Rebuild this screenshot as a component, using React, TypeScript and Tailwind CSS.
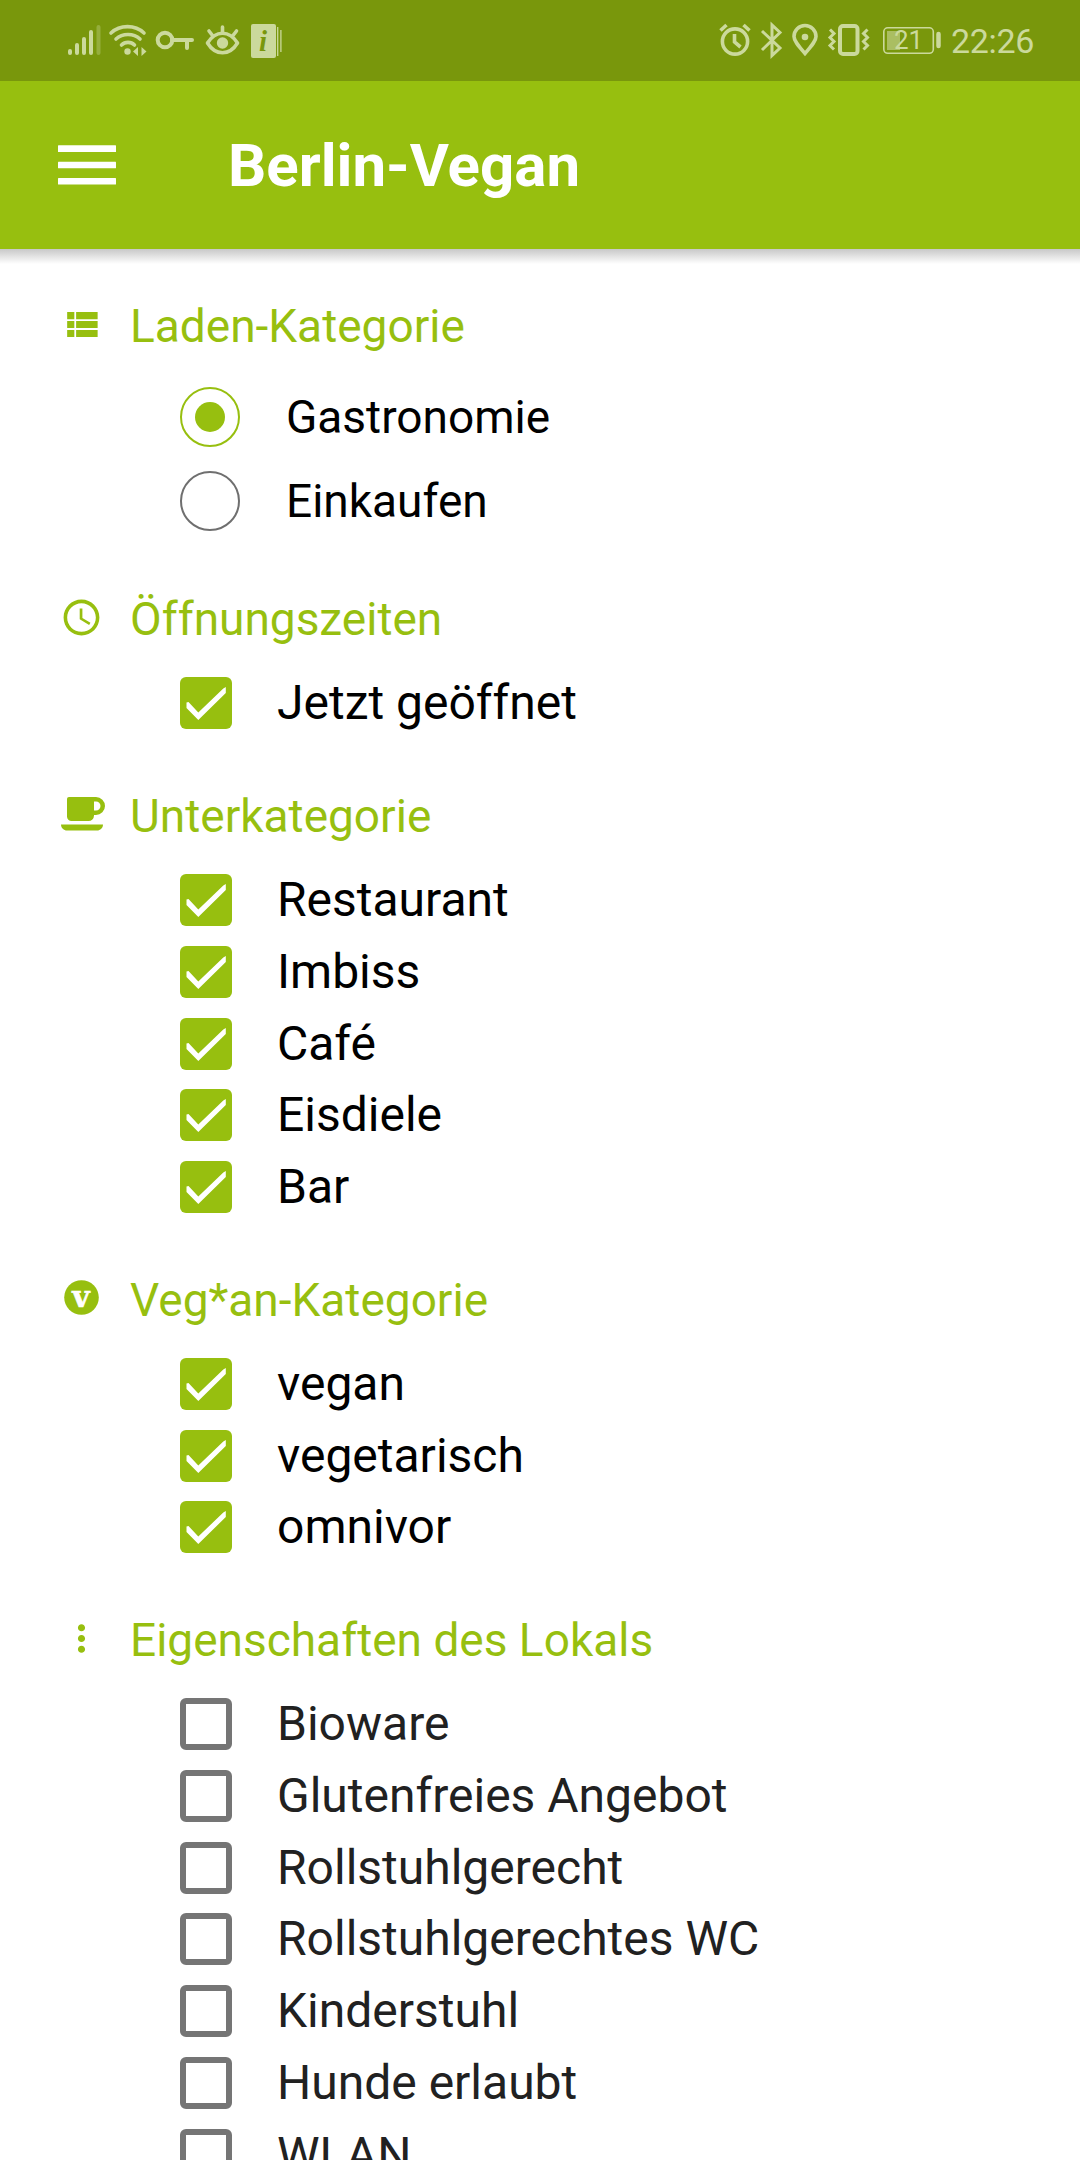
import React, { useState } from "react";
import { MdAccessTime, MdMoreVert } from "react-icons/md";

interface Option {
  id: string;
  label: string;
}

interface CheckGroup {
  id: string;
  title: string;
  icon: React.ReactNode;
  options: Option[];
  muted?: boolean;
}

function ListIcon() {
  return (
    <svg viewBox="0 0 24 24" className="size-[43px]" fill="currentColor">
      <path d="M4 14h4v-4H4v4zm0 5h4v-4H4v4zM4 9h4V5H4v4zm5 5h12v-4H9v4zm0 5h12v-4H9v4zM9 5v4h12V5H9z" />
    </svg>
  );
}

function CupIcon() {
  return (
    <svg viewBox="0 0 44 34" className="w-[44px] h-[34px] ml-[3px]" fill="currentColor">
      <path
        fillRule="evenodd"
        d="M8 0h27a9 9 0 0 1 0 18h-2v.5a5.500 5.500 0 0 1-5.500 5.500H10.500a4.500 4.500 0 0 1-4.500-4.500V2a2 2 0 0 1 2-2zM33 4.500v9h2a4.500 4.500 0 0 0 0-9z"
      />
      <path d="M0 27.500h42c0 3.600-2.800 6-6 6H6c-3.200 0-6-2.400-6-6z" />
    </svg>
  );
}

function VeganIcon() {
  return (
    <svg viewBox="0 0 35 35" className="size-[35px]">
      <circle cx="17.500" cy="17.500" r="17.300" fill="currentColor" />
      <text
        x="17"
        y="27"
        textAnchor="middle"
        fill="#fff"
        stroke="#fff"
        strokeWidth="0.6"
        className="font-['DejaVu_Serif'] text-[30px] font-bold"
      >
        v
      </text>
    </svg>
  );
}

const groups: CheckGroup[] = [
  {
    id: "hours",
    title: "Öffnungszeiten",
    icon: <MdAccessTime className="size-[43px]" />,
    options: [{ id: "open", label: "Jetzt geöffnet" }],
  },
  {
    id: "sub",
    title: "Unterkategorie",
    icon: <CupIcon />,
    options: [
      { id: "restaurant", label: "Restaurant" },
      { id: "imbiss", label: "Imbiss" },
      { id: "cafe", label: "Café" },
      { id: "eisdiele", label: "Eisdiele" },
      { id: "bar", label: "Bar" },
    ],
  },
  {
    id: "vegan",
    title: "Veg*an-Kategorie",
    icon: <VeganIcon />,
    options: [
      { id: "vegan", label: "vegan" },
      { id: "vegetarisch", label: "vegetarisch" },
      { id: "omnivor", label: "omnivor" },
    ],
  },
  {
    id: "props",
    title: "Eigenschaften des Lokals",
    icon: <MdMoreVert className="size-[43px]" />,
    muted: true,
    options: [
      { id: "bio", label: "Bioware" },
      { id: "gluten", label: "Glutenfreies Angebot" },
      { id: "rolli", label: "Rollstuhlgerecht" },
      { id: "rolliwc", label: "Rollstuhlgerechtes WC" },
      { id: "kinder", label: "Kinderstuhl" },
      { id: "hunde", label: "Hunde erlaubt" },
      { id: "wlan", label: "WLAN" },
    ],
  },
];

function StatusBar() {
  return (
    <div className="h-[81px] shrink-0 bg-[#79970c] text-[#cbd99c] flex items-center">
      <svg viewBox="0 0 250 70" className="w-[250px] h-[70px] ml-[50px] mt-[10px] self-start" fill="none" stroke="currentColor">
        <g strokeWidth="4" strokeLinecap="round">
          <path d="M20 41v2M27 35v8M34 29v14M41 22v21" />
          <path d="M48.500 17v26" opacity="0.35" />
        </g>
        <g strokeWidth="3.600" strokeLinecap="round">
          <path d="M61 23c9-8.500 24-8.500 33 0M66 29c6.500-6 17.500-6 24 0M71.500 35c3.500-3.500 9.500-3.500 13 0" />
        </g>
        <circle cx="77.500" cy="41.500" r="3.200" fill="currentColor" stroke="none" />
        <path d="M88 37v9l-5-4.500zM91.500 37v9l5-4.500z" fill="currentColor" stroke="none" />
        <g strokeWidth="4">
          <circle cx="115" cy="30" r="7.300" />
          <path d="M122 30h20M137 30v8" strokeLinecap="round" />
        </g>
        <g strokeWidth="3.600" strokeLinecap="round">
          <path d="M157.500 33c8-13 22-13 30 0-8 13-22 13-30 0z" strokeLinejoin="round" />
          <path d="M172.500 17v6M159 21l3.500 4.500M186.500 21l-3.500 4.500" />
        </g>
        <circle cx="172.500" cy="33" r="5.700" fill="currentColor" stroke="none" />
        <rect x="201" y="14" width="25" height="34" rx="2" fill="currentColor" stroke="none" />
        <path d="M227.700 17v29M230.900 20v22" strokeWidth="1.300" />
        <text x="213" y="41" textAnchor="middle" fill="#79970c" stroke="none" className="font-['Liberation_Serif'] text-[29px] font-bold italic">
          i
        </text>
      </svg>
      <svg viewBox="0 0 245 70" className="w-[245px] h-[70px] ml-[400px] mt-[10px] self-start" fill="none" stroke="currentColor">
        <g strokeWidth="3.600">
          <circle cx="35" cy="31.500" r="12.600" />
          <path d="M34.500 24v8l6 5" />
          <path d="M20.500 20.500l6-5.500M49.500 20.500l-6-5.500" />
        </g>
        <path d="M62 21l18 17-8 7.500V15l8 7.500L62 40" strokeWidth="3" />
        <path d="M105 43.500c-7-8-11-12.500-11-17a11 11 0 0 1 22 0c0 4.500-4 9-11 17z" strokeWidth="3.600" />
        <circle cx="105" cy="27" r="3.300" fill="currentColor" stroke="none" />
        <rect x="140" y="16" width="17.500" height="28" rx="3" strokeWidth="4" />
        <path d="M130 19.500l4 4-4 4 4 4-4 4 4 4M167.500 19.500l-4 4 4 4-4 4 4 4-4 4" strokeWidth="3" />
        <rect x="183.800" y="17.800" width="49.500" height="25.500" rx="4" strokeWidth="1.600" />
        <rect x="187" y="21" width="13" height="19" fill="currentColor" stroke="none" opacity="0.6" />
        <path d="M238.500 24v12" strokeWidth="4.500" strokeLinecap="round" />
        <text x="208.500" y="39" textAnchor="middle" fill="currentColor" stroke="none" className="font-[Roboto] text-[26px]">
          21
        </text>
      </svg>
      <span className="ml-[6px] text-[34px] leading-none tracking-[-0.3px]">22:26</span>
    </div>
  );
}

function SectionTitle({ icon, title }: { icon: React.ReactNode; title: string }) {
  return (
    <div className="h-[97.500px] flex items-center text-[#97bf0f]">
      <div className="w-[70px] ml-[46px] flex justify-center -mt-[3px]">{icon}</div>
      <h2 className="ml-[14px] mt-[1px] text-[46px] leading-none">{title}</h2>
    </div>
  );
}

function Checkbox({ checked }: { checked: boolean }) {
  if (!checked) {
    return <span className="size-[52px] rounded-[6px] border-[6px] border-[#757575]" />;
  }
  return (
    <span className="size-[52px] rounded-[6px] bg-[#97bf0f]">
      <svg viewBox="0 0 52 52" className="size-[52px]">
        <path d="M6.500 25.500l2-.5 9.800 10.500 25-24 2.500-1.500v6L18.300 43 6.500 31z" fill="#fff" />
      </svg>
    </span>
  );
}

function Radio({ checked }: { checked: boolean }) {
  return (
    <span
      className={`size-[60px] rounded-full border-2 flex items-center justify-center ${
        checked ? "border-[#97bf0f]" : "border-[#6f6f6f]"
      }`}
    >
      {checked && <span className="size-[30px] rounded-full bg-[#97bf0f]" />}
    </span>
  );
}

const shops: Option[] = [
  { id: "gastro", label: "Gastronomie" },
  { id: "einkauf", label: "Einkaufen" },
];

export default function App() {
  const [shop, setShop] = useState<string>("gastro");
  const [checked, setChecked] = useState<string[]>(
    groups.filter((g) => !g.muted).flatMap((g) => g.options.map((o) => o.id))
  );

  const toggle = (id: string) => {
    setChecked((prev) =>
      prev.includes(id) ? prev.filter((c) => c !== id) : [...prev, id]
    );
  };

  return (
    <div className="w-[1080px] h-[2160px] overflow-hidden bg-white font-[Roboto,sans-serif] flex flex-col">
      <StatusBar />
      <header className="h-[168px] shrink-0 bg-[#97bf0f] text-white flex items-center">
        <button className="ml-[58px]" aria-label="Menu">
          <svg viewBox="0 0 58 40" className="w-[58px] h-[40px]" fill="currentColor">
            <rect y="0.300" width="58" height="6.600" rx="0.500" />
            <rect y="16.700" width="58" height="6.600" rx="0.500" />
            <rect y="33" width="58" height="6.600" rx="0.500" />
          </svg>
        </button>
        <h1 className="ml-[112px] mt-[1px] text-[60px] font-bold leading-none">Berlin-Vegan</h1>
      </header>
      <div className="h-[15px] shrink-0 bg-linear-to-b from-[#c8c8c8] to-white" />

      <main className="pt-[13px]">
        <section>
          <SectionTitle icon={<ListIcon />} title="Laden-Kategorie" />
          {shops.map((s) => (
            <div
              key={s.id}
              className="h-[84px] pl-[180px] flex items-center gap-[46px] text-black"
              onClick={() => setShop(s.id)}
            >
              <Radio checked={shop === s.id} />
              <span className="text-[46px] leading-none">{s.label}</span>
            </div>
          ))}
        </section>

        {groups.map((g) => (
          <section key={g.id} className="mt-[27.500px]">
            <SectionTitle icon={g.icon} title={g.title} />
            {g.options.map((o) => (
              <div
                key={o.id}
                className={`h-[71.750px] pl-[180px] flex items-center gap-[45px] ${
                  g.muted ? "text-[#212121]" : "text-black"
                }`}
                onClick={() => toggle(o.id)}
              >
                <Checkbox checked={checked.includes(o.id)} />
                <span className="text-[48px] leading-none">{o.label}</span>
              </div>
            ))}
          </section>
        ))}
      </main>
    </div>
  );
}
